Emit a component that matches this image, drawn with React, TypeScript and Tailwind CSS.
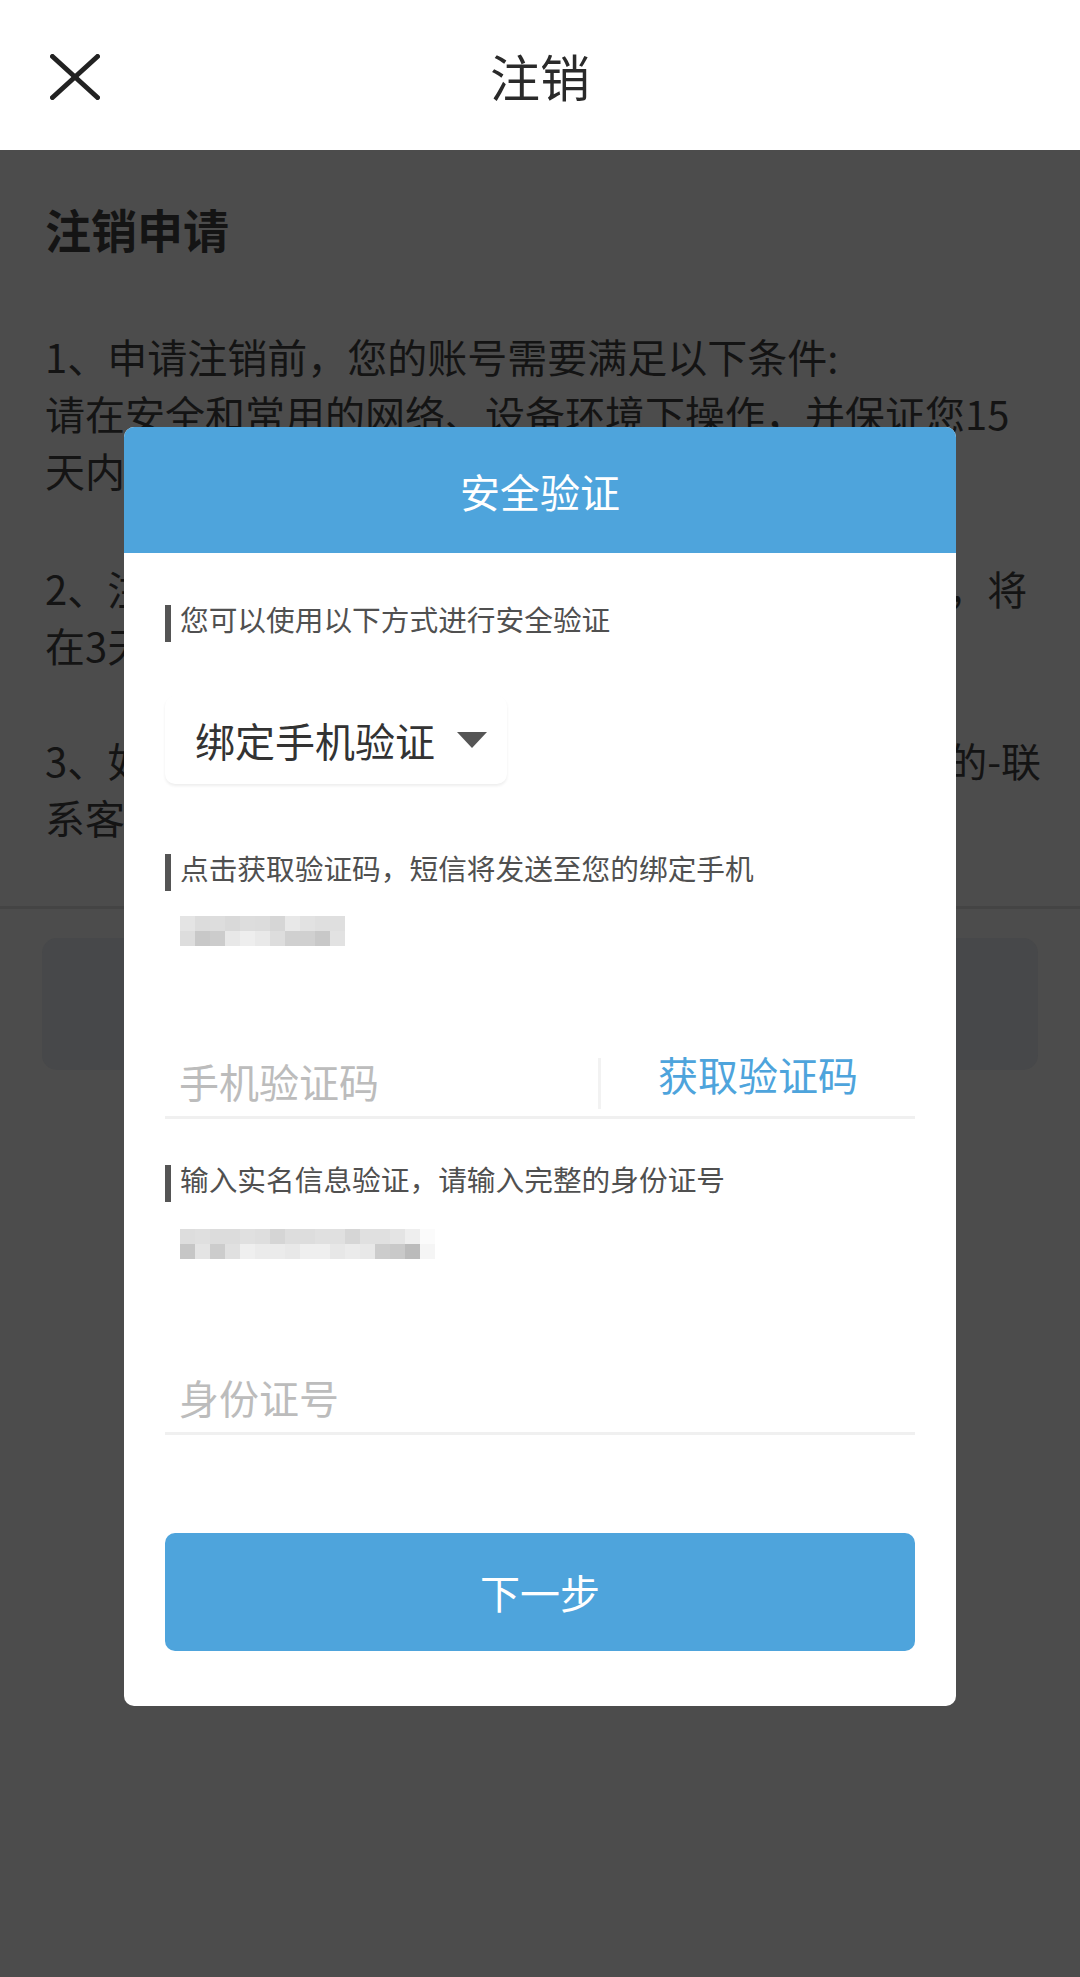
import { type ReactNode } from 'react'

const PHONE_PIXELS = [
    ['bg-[#e4e4e4]', 'bg-[#dcdcdc]', 'bg-[#dddddd]', 'bg-[#d9d9d9]', 'bg-[#dddddd]', 'bg-[#dcdcdc]', 'bg-[#d6d6d6]', 'bg-[#e8e8e8]', 'bg-[#e2e2e2]', 'bg-[#dfdfdf]', 'bg-[#dfdfdf]'],
    ['bg-[#dddddd]', 'bg-[#c8c8c8]', 'bg-[#cccccc]', 'bg-[#e8e8e8]', 'bg-[#eeeeee]', 'bg-[#e9e9e9]', 'bg-[#dddddd]', 'bg-[#d0d0d0]', 'bg-[#d0d0d0]', 'bg-[#c8c8c8]', 'bg-[#e2e2e2]'],
]

const ID_PIXELS = [
    ['bg-[#dddddd]', 'bg-[#dfdfdf]', 'bg-[#dcdcdc]', 'bg-[#dcdcdc]', 'bg-[#e0e0e0]', 'bg-[#dedede]', 'bg-[#d5d5d5]', 'bg-[#dddddd]', 'bg-[#dddddd]', 'bg-[#e0e0e0]', 'bg-[#e0e0e0]', 'bg-[#d6d6d6]', 'bg-[#e0e0e0]', 'bg-[#e0e0e0]', 'bg-[#e4e4e4]', 'bg-[#eeeeee]', 'bg-[#fbfbfb]'],
    ['bg-[#c6c6c6]', 'bg-[#e4e4e4]', 'bg-[#cccccc]', 'bg-[#e0e0e0]', 'bg-[#efefef]', 'bg-[#ebebeb]', 'bg-[#ebebeb]', 'bg-[#e8e8e8]', 'bg-[#efefef]', 'bg-[#efefef]', 'bg-[#e7e7e7]', 'bg-[#ebebeb]', 'bg-[#e8e8e8]', 'bg-[#cccccc]', 'bg-[#c9c9c9]', 'bg-[#bbbbbb]', 'bg-[#f5f5f5]'],
]

function Pixelated({ rows }: { rows: string[][] }) {
    return (
        <div className="ml-[15px] flex flex-col">
            {rows.map((row, i) => (
                <div key={i} className="flex">
                    {row.map((cls, j) => (
                        <div key={j} className={`h-[15px] w-[15px] ${cls}`} />
                    ))}
                </div>
            ))}
        </div>
    )
}

function SectionLabel({ children }: { children: ReactNode }) {
    return (
        <div className="flex items-start">
            <div className="h-[37px] w-[6px] bg-[#555555]" />
            <span className="ml-[9px] text-[28.7px] leading-[28px] text-[#505050]">{children}</span>
        </div>
    )
}

function CloseIcon() {
    return (
        <svg width="50" height="46" viewBox="0 0 50 46" fill="none" stroke="#222222" strokeWidth="5" strokeLinecap="round">
            <line x1="2.5" y1="2.5" x2="47.5" y2="43.5" />
            <line x1="47.5" y1="2.5" x2="2.5" y2="43.5" />
        </svg>
    )
}

export default function App() {
    return (
        <div className="relative min-h-[1977px] w-full bg-[#4c4c4c] font-['Noto_Sans_CJK_SC','Noto_Sans',sans-serif]">
            {/* top bar */}
            <header className="grid h-[150px] grid-cols-[150px_1fr_150px] items-center bg-white">
                <div className="pl-[50px] pt-[3px]">
                    <CloseIcon />
                </div>
                <h1 className="text-center text-[50px] leading-[60px] text-[#2a2a2a]">注销</h1>
                <div />
            </header>

            {/* page under the dim layer */}
            <main className="px-[45px] pt-[48px] text-[#141414]">
                <h2 className="text-[46px] font-bold leading-[60px]">注销申请</h2>
                <div className="mt-[70px] whitespace-nowrap text-[40px] leading-[57px]">
                    <p>
                        1、申请注销前，您的账号需要满足以下条件:
                        <br />
                        请在安全和常用的网络、设备环境下操作，并保证您15
                        <br />
                        天内没有修改过账号密码、绑定手机等重要信息。
                    </p>
                    <p className="mt-[61px]">
                        2、注销申请提交后，我们将会对您的申请进行审核，将
                        <br />
                        在3天内完成审核并通知您审核结果。
                    </p>
                    <p className="mt-[58px]">
                        3、如有疑问，您可以通过以下方式联系我们：在我的-联
                        <br />
                        系客服。
                    </p>
                </div>
            </main>
            <div className="mt-[60px] h-[3px] w-full bg-[#444444]" />
            <div className="mx-[42px] mt-[29px] h-[132px] rounded-[15px] bg-[#47484a]" />

            {/* dialog */}
            <div className="absolute left-[124px] top-[427px] w-[832px] overflow-hidden rounded-[10px] bg-white">
                <div className="flex h-[126px] items-center justify-center bg-[#4ea4dc] pt-[2px]">
                    <span className="text-[40px] text-white">安全验证</span>
                </div>

                <div className="px-[41px] pb-[55px] pt-[52px]">
                    <SectionLabel>您可以使用以下方式进行安全验证</SectionLabel>

                    <div className="mt-[54px] flex h-[88px] w-[342px] items-center rounded-[10px] bg-white pl-[30px] shadow-[0_2px_3px_rgba(0,0,0,0.07)]">
                        <span className="text-[40px] leading-[48px] text-[#333333]">绑定手机验证</span>
                        <svg className="ml-[22px]" width="30" height="16" viewBox="0 0 30 16">
                            <polygon points="0,0 30,0 15,16" fill="#555555" />
                        </svg>
                    </div>

                    <div className="mt-[70px]">
                        <SectionLabel>点击获取验证码，短信将发送至您的绑定手机</SectionLabel>
                    </div>
                    <div className="mt-[25px]">
                        <Pixelated rows={PHONE_PIXELS} />
                    </div>

                    <div className="mt-[98px] flex h-[75px] border-b-[3px] border-[#f0f0f0]">
                        <input
                            className="min-w-0 flex-1 bg-transparent pl-[14px] pt-[2px] text-[40px] text-[#333333] outline-none placeholder:text-[#bcbcbc]"
                            placeholder="手机验证码"
                        />
                        <div className="mt-[14px] h-[51px] w-[3px] bg-[#f2f2f2]" />
                        <button className="w-[314px] pb-[18px] text-center text-[40px] text-[#4ea4dc]">获取验证码</button>
                    </div>

                    <div className="mt-[46px]">
                        <SectionLabel>输入实名信息验证，请输入完整的身份证号</SectionLabel>
                    </div>
                    <div className="mt-[27px]">
                        <Pixelated rows={ID_PIXELS} />
                    </div>

                    <div className="mt-[101px] flex h-[75px] border-b-[3px] border-[#f0f0f0]">
                        <input
                            className="min-w-0 flex-1 bg-transparent pl-[14px] pt-[2px] text-[40px] text-[#333333] outline-none placeholder:text-[#bcbcbc]"
                            placeholder="身份证号"
                        />
                    </div>

                    <button className="mt-[98px] flex h-[118px] w-full items-center justify-center rounded-[10px] bg-[#4ea4dc] text-[40px] text-white">
                        下一步
                    </button>
                </div>
            </div>
        </div>
    )
}
